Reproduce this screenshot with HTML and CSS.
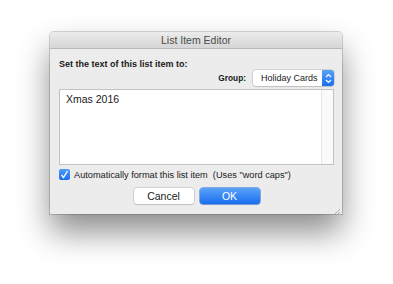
FILE: index.html
```html
<!DOCTYPE html>
<html lang="en">
<head>
    <meta charset="UTF-8">
    <title>List Item Editor</title>
    <link rel="stylesheet" href="styles.css">
</head>
<body>
    <div class="window">
        <div class="titlebar">List Item Editor</div>
        <div class="content">
            <div class="prompt">Set the text of this list item to:</div>
            <div class="group-row">
                <span class="group-label">Group:</span>
                <div class="popup">
                    <span class="popup-text">Holiday Cards</span>
                    <span class="popup-arrows">
                        <svg width="7" height="11" viewBox="0 0 7 11">
                            <path d="M1 4 L3.5 1.5 L6 4 M1 7 L3.5 9.5 L6 7" fill="none" stroke="#fff" stroke-width="1.2"/>
                        </svg>
                    </span>
                </div>
            </div>
            <div class="text-box">
                <div class="text-area">Xmas 2016</div>
                <div class="scroll-track"></div>
            </div>
            <label class="check-row">
                <span class="checkbox">
                    <svg width="9" height="9" viewBox="0 0 9 9">
                        <path d="M1.5 5 L3.5 7.5 L7.5 1" fill="none" stroke="#fff" stroke-width="1.4"/>
                    </svg>
                </span>
                <span>Automatically format this list item&nbsp; (Uses "word caps")</span>
            </label>
            <div class="buttons">
                <button class="btn">Cancel</button>
                <button class="btn btn-default">OK</button>
            </div>
            <div class="grip">
                <svg width="10" height="10" viewBox="0 0 10 10">
                    <path d="M9 2 L2 9 M9 5 L5 9 M9 8 L8 9" stroke="#9a9a9a" stroke-width="0.8"/>
                </svg>
            </div>
        </div>
    </div>
</body>
</html>
```

FILE: styles.css
```css
html {
    background-color: #ffffff;
}
body {
    margin: 0;
    min-height: 100vh;
    box-sizing: border-box;
    padding: 32px 0 0 50px;
    font-family: 'Liberation Sans', Arial, sans-serif;
    color: #1a1a1a;
}
.window {
    width: 292px;
    height: 182px;
    background-color: #ececec;
    border-radius: 4px 4px 0 0;
    box-shadow: 0 0 0 1px rgba(0, 0, 0, 0.16), 0 18px 32px rgba(0, 0, 0, 0.45);
    display: flex;
    flex-direction: column;
    overflow: hidden;
}
.titlebar {
    height: 16px;
    line-height: 17px;
    text-align: center;
    font-size: 10.5px;
    color: #4c4c4c;
    background: linear-gradient(#ececec, #d6d6d6);
    border-bottom: 1px solid #b9b9b9;
    flex-shrink: 0;
}
.content {
    position: relative;
    flex: 1;
    padding: 9px 8px 0 9px;
}
.prompt {
    font-size: 9px;
    font-weight: bold;
    line-height: 12px;
}
.group-row {
    display: flex;
    justify-content: flex-end;
    align-items: center;
    gap: 7px;
}
.group-label {
    font-size: 8.3px;
    font-weight: bold;
}
.popup {
    display: flex;
    width: 81px;
    height: 16px;
    border-radius: 3px;
    background-color: #fff;
    box-shadow: 0 0 0 0.5px #b8b8b8, 0 1px 1px rgba(0, 0, 0, 0.15);
    overflow: hidden;
}
.popup-text {
    flex: 1;
    font-size: 9px;
    line-height: 16px;
    padding-left: 8px;
    white-space: nowrap;
}
.popup-arrows {
    width: 12px;
    background: linear-gradient(#5aa2f8, #1a6ef0);
    display: flex;
    align-items: center;
    justify-content: center;
}
.text-box {
    display: flex;
    height: 74px;
    margin-top: 3px;
    background-color: #fff;
    border: 1px solid #c2c2c2;
}
.text-area {
    flex: 1;
    font-size: 10.5px;
    padding: 3px 6px;
}
.scroll-track {
    width: 11px;
    background-color: #fafafa;
    border-left: 1px solid #e6e6e6;
}
.check-row {
    display: flex;
    align-items: center;
    gap: 4px;
    margin-top: 4px;
    font-size: 9.2px;
}
.checkbox {
    width: 11px;
    height: 11px;
    border-radius: 2px;
    background: linear-gradient(#4f9bf8, #1a6ff0);
    display: flex;
    align-items: center;
    justify-content: center;
}
.buttons {
    display: flex;
    justify-content: center;
    gap: 6px;
    margin-top: 8px;
}
.btn {
    width: 60px;
    height: 16px;
    padding: 0;
    border: none;
    border-radius: 3px;
    font-family: inherit;
    font-size: 10.5px;
    color: #1a1a1a;
    background-color: #fff;
    box-shadow: 0 0 0 0.5px #b8b8b8, 0 1px 1px rgba(0, 0, 0, 0.15);
}
.btn-default {
    color: #fff;
    background: linear-gradient(#5aa2f8, #1a6ef0);
    box-shadow: 0 0 0 0.5px #1e66d8, 0 1px 1px rgba(0, 0, 0, 0.15);
}
.grip {
    position: absolute;
    right: 1px;
    bottom: 1px;
    width: 10px;
    height: 10px;
}
```
